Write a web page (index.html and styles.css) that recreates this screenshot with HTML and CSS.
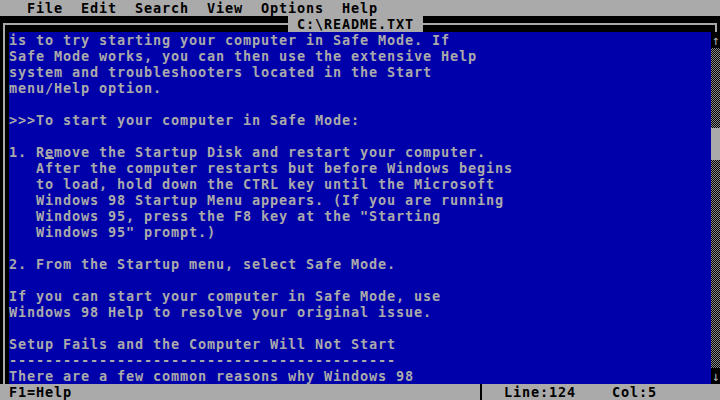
FILE: index.html
```html
<!DOCTYPE html>
<html lang="en">
<head>
    <meta charset="UTF-8">
    <title>C:\README.TXT - MS-DOS Editor</title>
    <link rel="stylesheet" href="styles.css">
</head>
<body>

<div class="screen">
    <pre class="menubar">   File  Edit  Search  View  Options  Help</pre>

    <div class="window">
        <div class="corner-tl"></div>
        <div class="title-row">
            <div class="rule rule-left"></div>
            <div class="title"> C:\README.TXT </div>
            <div class="rule"></div>
        </div>
        <div class="corner-tr"></div>

        <div class="edge-left"></div>
<pre class="text">is to try starting your computer in Safe Mode. If
Safe Mode works, you can then use the extensive Help
system and troubleshooters located in the Start
menu/Help option.

>>>To start your computer in Safe Mode:

1. Remove the Startup Disk and restart your computer.
   After the computer restarts but before Windows begins
   to load, hold down the CTRL key until the Microsoft
   Windows 98 Startup Menu appears. (If you are running
   Windows 95, press the F8 key at the "Starting
   Windows 95" prompt.)

2. From the Startup menu, select Safe Mode.

If you can start your computer in Safe Mode, use
Windows 98 Help to resolve your original issue.

Setup Fails and the Computer Will Not Start
-------------------------------------------
There are a few common reasons why Windows 98</pre>
        <div class="scrollbar">
            <div class="arrow">↑</div>
            <div class="track track-top"></div>
            <div class="thumb"></div>
            <div class="track track-rest"></div>
            <div class="arrow">↓</div>
        </div>
    </div>

    <div class="statusbar">
        <pre class="status-left"> F1=Help</pre>
        <div class="status-sep"></div>
        <pre class="status-right">  Line:124    Col:5</pre>
    </div>
</div>

</body>
</html>
```

FILE: styles.css
```css
body {
    margin: 0;
    background: #000;
}
pre {
    margin: 0;
    font: inherit;
}
/* 80x25 text screen, 9x16 cells */
.screen {
    width: 720px;
    height: 400px;
    font-family: "DejaVu Sans Mono", monospace;
    font-size: 13.5px;
    letter-spacing: 0.872px;
    font-weight: bold;
    line-height: 16px;
    color: #aaa;
    background: #000;
    overflow: hidden;
}
.menubar {
    height: 16px;
    background: #aaa;
    color: #000;
}

/* editor window: border column, text, scrollbar */
.window {
    display: grid;
    grid-template-columns: 9px 702px 9px;
    grid-template-rows: 16px 352px;
}
.corner-tl {
    background:
        linear-gradient(#aaa, #aaa) 3px 7px / 6px 2px no-repeat,
        linear-gradient(#aaa, #aaa) 3px 7px / 2px 9px no-repeat;
}
.corner-tr {
    background:
        linear-gradient(#aaa, #aaa) 0 7px / 6px 2px no-repeat,
        linear-gradient(#aaa, #aaa) 4px 7px / 2px 9px no-repeat;
}
.title-row {
    display: flex;
}
.rule {
    flex: 1;
    background: linear-gradient(#aaa, #aaa) 0 7px / 100% 2px no-repeat;
}
.rule-left {
    flex: 0 0 279px;
}
.title {
    white-space: pre;
    background: #aaa;
    color: #000;
}
.edge-left {
    background: linear-gradient(#aaa, #aaa) 3px 0 / 2px 100% no-repeat;
}
/* text cursor: line 8, col 5 of the visible text */
.text {
    color: #aaa;
    background:
        linear-gradient(#aaa, #aaa) 36px 125px / 9px 2px no-repeat,
        #0000aa;
}

.scrollbar {
    display: flex;
    flex-direction: column;
}
.arrow {
    height: 16px;
    text-align: center;
    font-weight: normal;
    letter-spacing: 0;
    background: #000;
    color: #aaa;
}
.track {
    background: repeating-conic-gradient(#8a8a8a 0 25%, #000 0 50%) 0 0 / 2px 2px;
}
.track-top {
    height: 80px;
}
.track-rest {
    flex: 1;
}
.thumb {
    height: 32px;
    background: #aaa;
}

.statusbar {
    display: flex;
    height: 16px;
    background: #aaa;
    color: #000;
}
.status-left {
    width: 477px;
}
.status-sep {
    width: 9px;
    background: linear-gradient(#000, #000) 3px 0 / 2px 100% no-repeat;
}
.status-right {
    flex: 1;
}
```
